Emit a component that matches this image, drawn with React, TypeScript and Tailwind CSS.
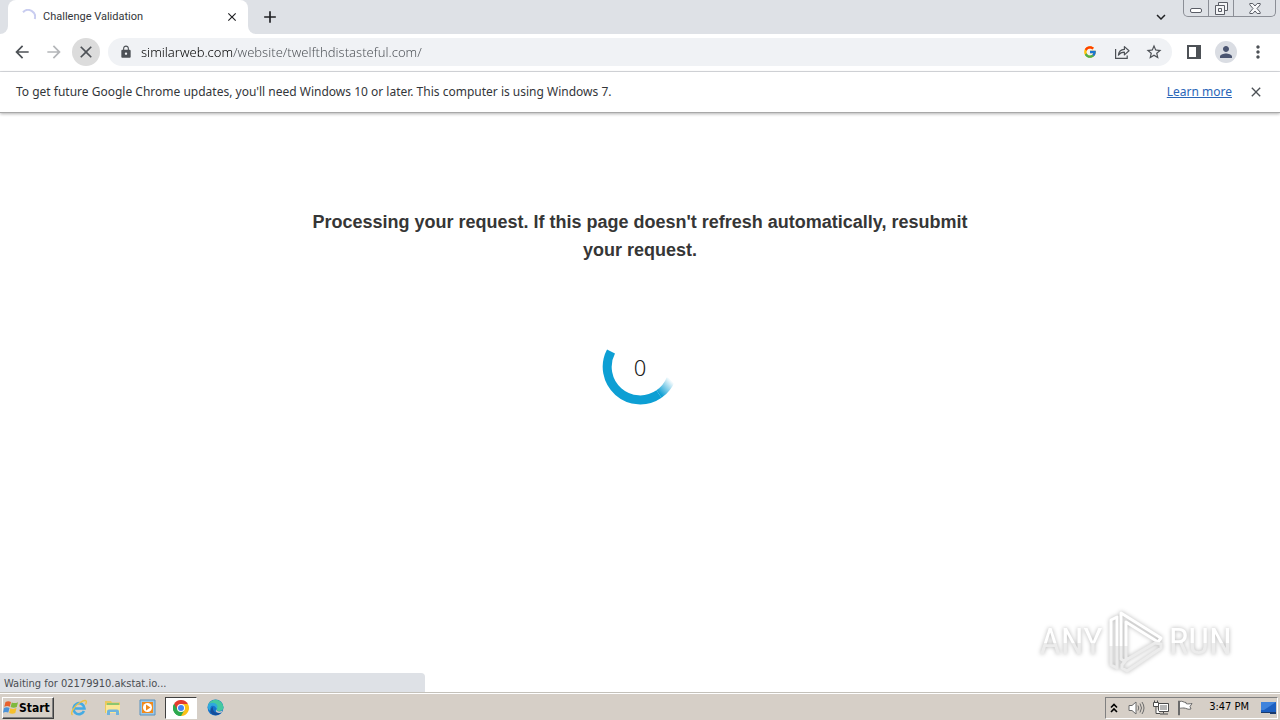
import React, { useState } from 'react';
import { FcGoogle } from 'react-icons/fc';
import {
	MdAdd,
	MdArrowBack,
	MdArrowForward,
	MdClose,
	MdExpandMore,
	MdLock,
	MdMoreVert,
	MdPerson,
	MdStarBorder,
} from 'react-icons/md';

const App: React.FC = () => (
	<div className="flex min-h-screen flex-col bg-white font-['DejaVu_Sans_Condensed','DejaVu_Sans',sans-serif] text-[#202124]">
		<TabStrip />
		<Toolbar />
		<InfoBar />
		<Page />
		<Taskbar />
	</div>
);

const TabStrip = () => (
	<header className="flex h-[34px] bg-[#dee1e6]">
		<div className="size-2 self-end bg-white">
			<div className="size-full rounded-br-lg bg-[#dee1e6]" />
		</div>
		<div className="flex w-60 items-center rounded-t-lg bg-white pr-2 pl-3">
			<icons.TabSpinner />
			<span className="ml-[7px] flex-1 font-[Roboto,sans-serif] text-[11px] text-[#33363a]">
				Challenge Validation
			</span>
			<button
				aria-label="Close tab"
				className="flex size-4 items-center justify-center">
				<MdClose size={14} />
			</button>
		</div>
		<div className="size-2 self-end bg-white">
			<div className="size-full rounded-bl-lg bg-[#dee1e6]" />
		</div>
		<button
			aria-label="New tab"
			className="ml-1 flex w-5 items-center justify-center">
			<MdAdd size={20} />
		</button>
		<button
			aria-label="Search tabs"
			className="mr-3 ml-auto flex w-5 items-center justify-center">
			<MdExpandMore size={18} />
		</button>
		<div className="mr-1 flex h-[17px] rounded-b-[5px] border border-t-0 border-[#8b8e96] text-[#5a5d66]">
			<button
				aria-label="Minimize"
				className="flex w-[25px] items-center justify-center border-r border-[#8b8e96]">
				<icons.Minimize />
			</button>
			<button
				aria-label="Restore"
				className="flex w-[25px] items-center justify-center border-r border-[#8b8e96]">
				<icons.Restore />
			</button>
			<button
				aria-label="Close"
				className="flex w-[41px] items-center justify-center">
				<icons.WindowClose />
			</button>
		</div>
	</header>
);

const Toolbar = () => {
	const [url, setUrl] = useState('similarweb.com/website/twelfthdistasteful.com/');
	return (
		<nav className="flex h-[38px] items-center border-b border-[#dadce0] pr-3 pb-px pl-2 text-[#4d5156]">
			<button
				aria-label="Back"
				className="flex size-7 items-center justify-center">
				<MdArrowBack size={20} />
			</button>
			<button
				aria-label="Forward"
				className="ml-1 flex size-7 items-center justify-center text-[#b4b6b9]">
				<MdArrowForward size={20} />
			</button>
			<button
				aria-label="Stop loading"
				className="ml-1 flex size-7 items-center justify-center rounded-full bg-[#dcdcdc]">
				<MdClose size={20} />
			</button>
			<div className="ml-2 flex h-7 flex-1 items-center rounded-full bg-[#f0f2f5] pr-2 pl-[11px]">
				<MdLock size={14} />
				<input
					aria-label="Address"
					value={url}
					onChange={(e) => setUrl(e.target.value)}
					className="ml-2 h-full flex-1 bg-[linear-gradient(to_right,#000000_92px,#4d5156_92px)] bg-clip-text font-['Noto_Sans',sans-serif] text-[13px] font-light text-transparent outline-none"
				/>
				<button
					aria-label="Search with Google"
					className="flex w-5 justify-center">
					<FcGoogle size={14} />
				</button>
				<button
					aria-label="Share"
					className="ml-3 flex w-5 justify-center">
					<icons.Share />
				</button>
				<button
					aria-label="Bookmark this tab"
					className="ml-3 flex w-5 justify-center">
					<MdStarBorder size={18} />
				</button>
			</div>
			<button
				aria-label="Side panel"
				className="ml-3 flex w-5 justify-center">
				<icons.SidePanel />
			</button>
			<button
				aria-label="Profile"
				className="ml-[11px] flex size-[22px] items-center justify-center rounded-full bg-[#dadde3] text-[#4a5470]">
				<MdPerson size={18} />
			</button>
			<button
				aria-label="Menu"
				className="ml-[11px] flex w-5 justify-center">
				<MdMoreVert size={20} />
			</button>
		</nav>
	);
};

const InfoBar = () => (
	<div className="flex h-[41px] items-center border-b border-[#a8a8a8] pr-4 pl-4 font-['Noto_Sans',sans-serif] text-xs shadow-[0_1px_3px_rgba(0,0,0,0.3)]">
		<p className="flex-1 text-[#33363a]">
			To get future Google Chrome updates, you'll need Windows 10 or later. This computer is using Windows 7.
		</p>
		<a
			href="#"
			className="text-[#2a66b8] underline">
			Learn more
		</a>
		<button
			aria-label="Dismiss"
			className="ml-4 text-[#4d5156]">
			<MdClose size={16} />
		</button>
	</div>
);

const Page = () => (
	<main className="flex flex-1 flex-col items-center">
		<h1 className="mt-[95px] max-w-[690px] text-center font-['Liberation_Sans',sans-serif] text-lg leading-7 font-bold text-[#363636]">
			Processing your request. If this page doesn't refresh automatically, resubmit your request.
		</h1>
		<div className="mt-[65px] grid place-items-center">
			<div className="col-start-1 row-start-1">
				<icons.Ring />
			</div>
			<span className="col-start-1 row-start-1 font-['Noto_Sans',sans-serif] text-[22px] font-light text-[#202020]">
				0
			</span>
		</div>
		<div className="mt-auto flex w-full items-end justify-between">
			<p className="h-[19px] w-[425px] rounded-tr bg-[#dee1e6] px-1 text-[11px] leading-[22px] text-[#4a4d52]">
				Waiting for 02179910.akstat.io...
			</p>
			<div className="mr-12 mb-[18px] flex items-center gap-1 font-['Roboto_Condensed','Open_Sans_Condensed',Roboto,sans-serif] text-[37px] drop-shadow-[0_0_2px_rgba(0,0,0,0.3)]">
				<span className="bg-[linear-gradient(to_bottom,#ffffff_52%,#ececec_52%)] bg-clip-text text-transparent">
					ANY
				</span>
				<icons.Play />
				<span className="bg-[linear-gradient(to_bottom,#ffffff_52%,#ececec_52%)] bg-clip-text text-transparent">
					RUN
				</span>
			</div>
		</div>
	</main>
);

const Taskbar = () => (
	<footer className="flex h-7 items-center border-t border-[#c4c1ba] bg-[#d6cfc7] pr-0.5 pl-0.5 shadow-[inset_0_1px_0_#ffffff]">
		<button className="mt-0.5 flex h-[22px] w-[52px] items-center border border-t-white border-r-[#404040] border-b-[#404040] border-l-white text-xs font-bold text-black shadow-[inset_-1px_-1px_0_#808080]">
			<icons.Windows />
			Start
		</button>
		<div className="mt-0.5 ml-[9px] flex items-center gap-0.5">
			{Object.entries(apps).map(([name, Icon]) => (
				<button
					key={name}
					aria-label={name}
					className={
						name === 'Google Chrome'
							? 'flex h-[22px] w-8 items-center justify-center border border-t-[#404040] border-r-white border-b-white border-l-[#404040] bg-white'
							: 'flex h-[22px] w-8 items-center justify-center'
					}>
					<Icon />
				</button>
			))}
		</div>
		<div className="mt-0.5 ml-auto flex h-[22px] items-center border border-t-[#808080] border-r-white border-b-white border-l-[#808080] pl-1 text-[11px] text-black">
			<icons.TrayArrows />
			<div className="ml-2.5 flex items-center gap-2">
				<icons.Speaker />
				<icons.Network />
				<icons.Flag />
			</div>
			<time className="ml-4">3:47 PM</time>
			<div className="ml-3">
				<icons.Desktop />
			</div>
		</div>
	</footer>
);

const icons = {
	TabSpinner: () => (
		<svg width="16" height="16" viewBox="0 0 16 16" fill="none">
			<path d="M3 3.2A7 7 0 0 1 14.8 10" stroke="#c9cdf0" strokeWidth="2" />
		</svg>
	),
	Minimize: () => (
		<svg width="13" height="13" viewBox="0 0 13 13" fill="white" stroke="currentColor">
			<rect x="0.5" y="6.5" width="11" height="4" rx="1.5" />
		</svg>
	),
	Restore: () => (
		<svg width="13" height="13" viewBox="0 0 13 13" fill="#f4f5f7" stroke="currentColor">
			<path d="M3.5.5h9v8h-9z" />
			<path d="M.5 3.5h9v9h-9z" />
			<path d="M3.5 6.5h3v3h-3z" />
		</svg>
	),
	WindowClose: () => (
		<svg width="12" height="11" viewBox="0 0 12 11" fill="#f8f8fa" stroke="currentColor">
			<path d="M.8.5h3L6 3 8.2.5h3v1.3L8 5.5l3.2 3.7v1.3h-3L6 8l-2.2 2.5h-3V9.2L4 5.5.8 1.8z" />
		</svg>
	),
	Share: () => (
		<svg width="16" height="16" viewBox="0 0 16 16" fill="none" stroke="currentColor" strokeWidth="1.2">
			<path d="M1.6 5v9.4h11.6v-3" />
			<path d="M4.4 11.2c.3-3.8 2.5-5.7 6-5.8V2.6l4.6 4.2-4.6 4.1V8.2c-2.5 0-4.5.9-6 3z" strokeLinejoin="round" />
		</svg>
	),
	SidePanel: () => (
		<svg width="14" height="14" viewBox="0 0 14 14">
			<path d="M1 1h12v12H1z" fill="none" stroke="currentColor" strokeWidth="2" />
			<path d="M9 1h4v12H9z" fill="currentColor" />
		</svg>
	),
	// the tail is split off so that only its last stretch fades
	Ring: () => (
		<svg width="76" height="76" viewBox="0 0 76 76" fill="none" strokeWidth="9">
			<defs>
				<linearGradient id="tail" gradientUnits="userSpaceOnUse" x1="57" y1="64" x2="70" y2="52">
					<stop stopColor="#0d9fd4" />
					<stop offset="1" stopColor="#0d9fd4" stopOpacity="0" />
				</linearGradient>
			</defs>
			<path d="M9 22.5A33 33 0 0 0 57 65" stroke="#0d9fd4" />
			<path d="M57 65A33 33 0 0 0 69 50" stroke="url(#tail)" />
		</svg>
	),
	Play: () => (
		<svg width="58" height="64" viewBox="0 0 58 64" fill="none" stroke="white" strokeWidth="3" strokeLinejoin="round">
			<path d="M14 36V3l40 25-3 4-32-20v24M4 36V10l6-3v29" />
			<path d="M14 36v13l3 2 2-2V36M4 36v19l6 3V36M19 50l29-17 6 1v4L20 61l-5-3v-3z" stroke="#ececec" />
		</svg>
	),
	Windows: () => (
		<svg width="16" height="15" viewBox="0 0 16 15">
			<path d="M2.5 2C4.500.8 6.300 1 8 2L6.800 6.700C5 5.800 3.200 5.900 1.300 6.800z" fill="#e8602c" />
			<path d="M8.800 2.400c2 1 4 .9 6.200-.2L13.800 7c-2 1-4.100 1-6.200.1z" fill="#7fb93c" />
			<path d="M1 7.900c2-1 3.800-.9 5.500 0L5.300 12.600c-1.800-.9-3.500-.8-5.300.1z" fill="#4a92d8" />
			<path d="M7.300 8.200c2 1 4.100.9 6.200-.1l-1.200 4.800c-2 1-4.200 1-6.200 0z" fill="#f6c02d" />
		</svg>
	),
	TrayArrows: () => (
		<svg width="8" height="10" viewBox="0 0 8 10" fill="none" stroke="black" strokeWidth="1.600">
			<path d="M1 4.500l3-3 3 3M1 9l3-3 3 3" />
		</svg>
	),
	Speaker: () => (
		<svg width="17" height="16" viewBox="0 0 17 16" fill="none" stroke="#6b6b6b">
			<path d="M1 5.500h3L8 2v12l-4-3.500H1z" fill="white" />
			<path d="M10 5.500q1.500 2.500 0 5M12 3.500q3 4.500 0 9M14 2q4 6 0 12" />
		</svg>
	),
	Network: () => (
		<svg width="16" height="16" viewBox="0 0 16 16" fill="white" stroke="#4a4a4a">
			<path d="M5.500 3.500h10v8h-10zM7 14h8M10.500 11.500v2" />
			<path d="M7 5h7v5H7z" fill="#b5b5b5" stroke="none" />
			<path d="M.5 2.500h5v4h-5zM1.500.5v2M4.500.5v2M3 6.500v7h4" />
		</svg>
	),
	Flag: () => (
		<svg width="16" height="16" viewBox="0 0 16 16" fill="white" stroke="#6b6b6b">
			<path d="M2.500 1.500c3-1 4 1 6.500 1v1c2 1 4 0 6 0l-2 3 1 2.500c-3 1-5-1-7-1s-3 0-4.500.5" />
			<path d="M1.500 1v14h1V1z" />
		</svg>
	),
	Desktop: () => (
		<svg width="16" height="14" viewBox="0 0 16 14">
			<path d="M0 1h15v10H0z" fill="#1d5fc0" />
			<path d="M0 1h15L3 9H0z" fill="#3f83dc" />
			<path d="M0 11h15v1H0zM9 12h6v1H9z" fill="#1a3a6c" />
		</svg>
	),
};

const apps = {
	'Internet Explorer': () => (
		<svg width="18" height="18" viewBox="0 0 18 18" fill="none">
			<path d="M14 12A5.500 5.500 0 1 1 14.500 9.500H5" stroke="#45abe3" strokeWidth="2.600" />
			<path d="M2.500 16C0 14 4 7 10 3.500s7.500-2 5.500 2" stroke="#edc243" strokeWidth="1.400" />
		</svg>
	),
	Explorer: () => (
		<svg width="18" height="18" viewBox="0 0 18 18">
			<path d="M1 2h6l1 1.500h8V14H1z" fill="#e9c95c" />
			<path d="M3 4h12v4H3z" fill="#8cc66f" />
			<path d="M2 6h14v8H2z" fill="#fbe795" />
			<path d="M3 16v-3.500q0-2 2-2h8q2 0 2 2V16h-3v-3H6v3z" fill="#6fb3dd" />
		</svg>
	),
	'Media Player': () => (
		<svg width="17" height="17" viewBox="0 0 17 17">
			<path d="M1 1h15v15H1z" fill="#9cc8e8" stroke="#5a93bf" />
			<path d="M3 3h11v11H3z" fill="#f08a1c" />
			<circle cx="8.500" cy="8.500" r="4.500" fill="white" />
			<path d="M7 5.500l4.500 3-4.500 3z" fill="#f08a1c" />
		</svg>
	),
	'Google Chrome': () => (
		<svg width="16" height="16" viewBox="0 0 16 16">
			<path d="M8 8L1.070 4A8 8 0 0 1 14.930 4z" fill="#e33b2e" />
			<path d="M8 8V4h6.930A8 8 0 0 1 8 16z" fill="#fbc116" />
			<path d="M1.070 4A8 8 0 0 0 8 16l3.500-6L8 8z" fill="#2da94f" />
			<path d="M1.070 4H8v4l-3.500 2z" fill="#e33b2e" />
			<path d="M1.070 4L4.500 10 8 16A8 8 0 0 1 1.070 4z" fill="#2da94f" />
			<circle cx="8" cy="8" r="4" fill="white" />
			<circle cx="8" cy="8" r="3" fill="#4285f4" />
		</svg>
	),
	Edge: () => (
		<svg width="17" height="17" viewBox="0 0 17 17">
			<circle cx="8.500" cy="8.500" r="8" fill="#1673cc" />
			<path d="M1 6a8 8 0 0 1 15.500 2c0 3-2 4-4.500 4-2 0-2.500-1-2-2 .5-2-1-4-4-4.500S2 5 1 6z" fill="#45c9a0" />
			<path d="M1 6c2-3 7-3 9 0 1 2 0 3-.5 4C9 7 6 6 4.500 7S3 10 4 12C1 11 .5 8 1 6z" fill="#2fa8dd" />
			<path d="M6 8c-1 4 3 7 8 5.500-2 3-6 3.500-9 1.500S3.500 9 6 8z" fill="#154f9c" />
			<path d="M9.500 10c-1 2 3 3.500 6 1.500l-1 2c-4 1.500-7-1-5-3.500z" fill="#d6cfc7" />
		</svg>
	),
};

export default App;
